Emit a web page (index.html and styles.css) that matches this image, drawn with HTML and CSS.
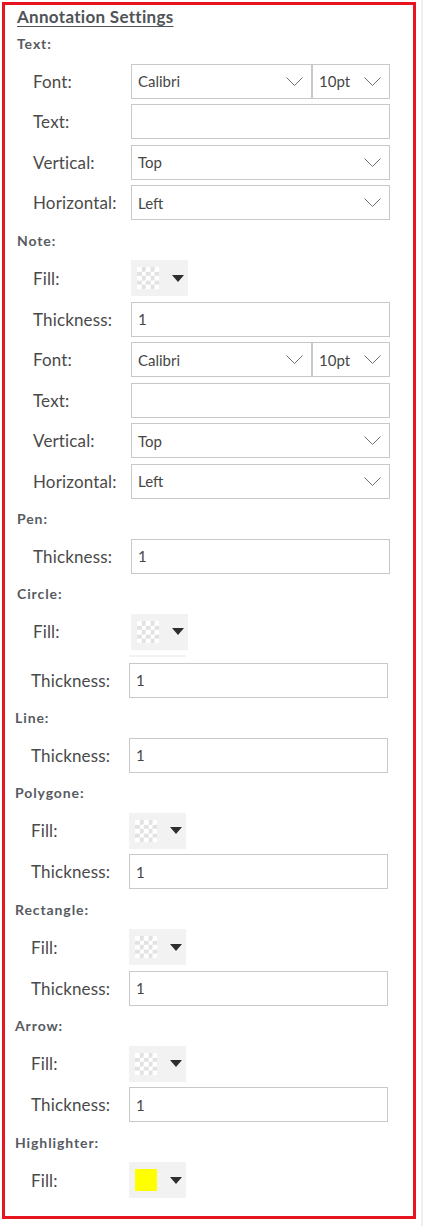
FILE: index.html
```html
<!DOCTYPE html>
<html lang="en">
<head>
<meta charset="utf-8">
<title>Annotation Settings</title>
<link rel="stylesheet" href="styles.css">
</head>
<body>
<div class="page">
  <div class="panel">
    <div class="title">Annotation Settings</div>
    <div class="list">
      <div class="group">
        <div class="head">Text:</div>
        <div class="row">
          <span class="label">Font:</span>
          <div class="split">
            <div class="select font"><span>Calibri</span><svg class="chev" viewBox="0 0 17 9" width="17" height="9"><polyline points="0.5,0.5 8.5,8.5 16.5,0.5"/></svg></div>
            <div class="select size"><span>10pt</span><svg class="chev" viewBox="0 0 17 9" width="17" height="9"><polyline points="0.5,0.5 8.5,8.5 16.5,0.5"/></svg></div>
          </div>
        </div>
        <div class="row"><span class="label">Text:</span><div class="input"></div></div>
        <div class="row"><span class="label">Vertical:</span><div class="select"><span>Top</span><svg class="chev" viewBox="0 0 17 9" width="17" height="9"><polyline points="0.5,0.5 8.5,8.5 16.5,0.5"/></svg></div></div>
        <div class="row"><span class="label">Horizontal:</span><div class="select"><span>Left</span><svg class="chev" viewBox="0 0 17 9" width="17" height="9"><polyline points="0.5,0.5 8.5,8.5 16.5,0.5"/></svg></div></div>

        <div class="head">Note:</div>
        <div class="row fillrow"><span class="label">Fill:</span><div class="fill"><span class="swatch checker"></span><span class="caret"></span></div></div>
        <div class="row"><span class="label">Thickness:</span><div class="input">1</div></div>
        <div class="row">
          <span class="label">Font:</span>
          <div class="split">
            <div class="select font"><span>Calibri</span><svg class="chev" viewBox="0 0 17 9" width="17" height="9"><polyline points="0.5,0.5 8.5,8.5 16.5,0.5"/></svg></div>
            <div class="select size"><span>10pt</span><svg class="chev" viewBox="0 0 17 9" width="17" height="9"><polyline points="0.5,0.5 8.5,8.5 16.5,0.5"/></svg></div>
          </div>
        </div>
        <div class="row"><span class="label">Text:</span><div class="input"></div></div>
        <div class="row"><span class="label">Vertical:</span><div class="select"><span>Top</span><svg class="chev" viewBox="0 0 17 9" width="17" height="9"><polyline points="0.5,0.5 8.5,8.5 16.5,0.5"/></svg></div></div>
        <div class="row"><span class="label">Horizontal:</span><div class="select"><span>Left</span><svg class="chev" viewBox="0 0 17 9" width="17" height="9"><polyline points="0.5,0.5 8.5,8.5 16.5,0.5"/></svg></div></div>

        <div class="head">Pen:</div>
        <div class="row"><span class="label">Thickness:</span><div class="input">1</div></div>

        <div class="head">Circle:</div>
        <div class="row fillrow"><span class="label">Fill:</span><div class="fill"><span class="swatch checker"></span><span class="caret"></span></div></div>
      </div>

      <div class="group shifted">
        <div class="row sep"><span class="label"></span><div class="sepline"></div></div>
        <div class="row"><span class="label">Thickness:</span><div class="input">1</div></div>

        <div class="head">Line:</div>
        <div class="row"><span class="label">Thickness:</span><div class="input">1</div></div>

        <div class="head">Polygone:</div>
        <div class="row fillrow"><span class="label">Fill:</span><div class="fill"><span class="swatch checker"></span><span class="caret"></span></div></div>
        <div class="row"><span class="label">Thickness:</span><div class="input">1</div></div>

        <div class="head">Rectangle:</div>
        <div class="row fillrow"><span class="label">Fill:</span><div class="fill"><span class="swatch checker"></span><span class="caret"></span></div></div>
        <div class="row"><span class="label">Thickness:</span><div class="input">1</div></div>

        <div class="head">Arrow:</div>
        <div class="row fillrow"><span class="label">Fill:</span><div class="fill"><span class="swatch checker"></span><span class="caret"></span></div></div>
        <div class="row"><span class="label">Thickness:</span><div class="input">1</div></div>

        <div class="head">Highlighter:</div>
        <div class="row fillrow"><span class="label">Fill:</span><div class="fill"><span class="swatch yellow"></span><span class="caret"></span></div></div>
      </div>
    </div>
  </div>
  <div class="scrolltrack"></div>
</div>
</body>
</html>
```

FILE: styles.css
```css
html, body {
  margin: 0;
  padding: 0;
  background: #ffffff;
}

body {
  font-family: Lato, "Open Sans", "Liberation Sans", sans-serif;
  color: #333333;
}

.page {
  display: flex;
  align-items: flex-start;
  height: 1226px;
}

.panel {
  box-sizing: border-box;
  width: 414px;
  height: 1217px;
  margin: 2px 0 0 2px;
  border: 3px solid #e8141f;
  padding: 1px 0 0 12px;
}

.scrolltrack {
  width: 2px;
  height: 1226px;
  margin-left: 5px;
  background: #efefef;
}

.title {
  height: 22px;
  line-height: 22px;
  margin-bottom: 1px;
  font-size: 17px;
  font-weight: 700;
  letter-spacing: 0.3px;
  color: #505358;
  text-decoration: underline;
  text-decoration-thickness: 1px;
  text-underline-offset: 3px;
}

.list {
  display: flex;
  flex-direction: column;
  gap: 5.5px;
}

.group {
  display: flex;
  flex-direction: column;
  gap: 5.5px;
}

.group.shifted {
  margin-left: -2px;
}

.head {
  height: 29px;
  line-height: 29px;
  font-size: 14px;
  font-weight: 700;
  letter-spacing: 0.9px;
  color: #575b61;
}

.row {
  display: grid;
  grid-template-columns: 98px 259px;
  align-items: center;
  padding-left: 16px;
  height: 35px;
}

.row.fillrow {
  height: 36px;
}

.row.sep {
  height: 2px;
}

.sepline {
  width: 57px;
  height: 2px;
  background: #f2f2f2;
}

.label {
  font-size: 17px;
  letter-spacing: 0.15px;
  color: #4a4a4a;
}

.input,
.select {
  box-sizing: border-box;
  height: 35px;
  border: 1px solid #c8c8c8;
  background: #ffffff;
  font-size: 15px;
  color: #464646;
  padding: 0 8px 0 6px;
  display: flex;
  align-items: center;
  justify-content: space-between;
}

.split {
  display: flex;
  height: 35px;
}

.select.font {
  width: 181px;
}

.select.size {
  width: 78px;
}

.chev {
  display: block;
  flex: none;
}

.chev polyline {
  fill: none;
  stroke: #707070;
  stroke-width: 1;
}

.fill {
  box-sizing: border-box;
  width: 57px;
  height: 36px;
  background: #f2f2f2;
  display: flex;
  align-items: center;
  padding-left: 6px;
}

.swatch {
  display: block;
  width: 22px;
  height: 22px;
  flex: none;
}

.swatch.checker {
  background:
    conic-gradient(#e2e2e2 25%, #ffffff 0 50%, #e2e2e2 0 75%, #ffffff 0) 0 0 / 8.8px 8.8px;
}

.swatch.yellow {
  background: #ffff00;
}

.caret {
  display: block;
  width: 0;
  height: 0;
  margin-left: 13px;
  border-left: 6px solid transparent;
  border-right: 6px solid transparent;
  border-top: 7px solid #2e2e2e;
}
```
